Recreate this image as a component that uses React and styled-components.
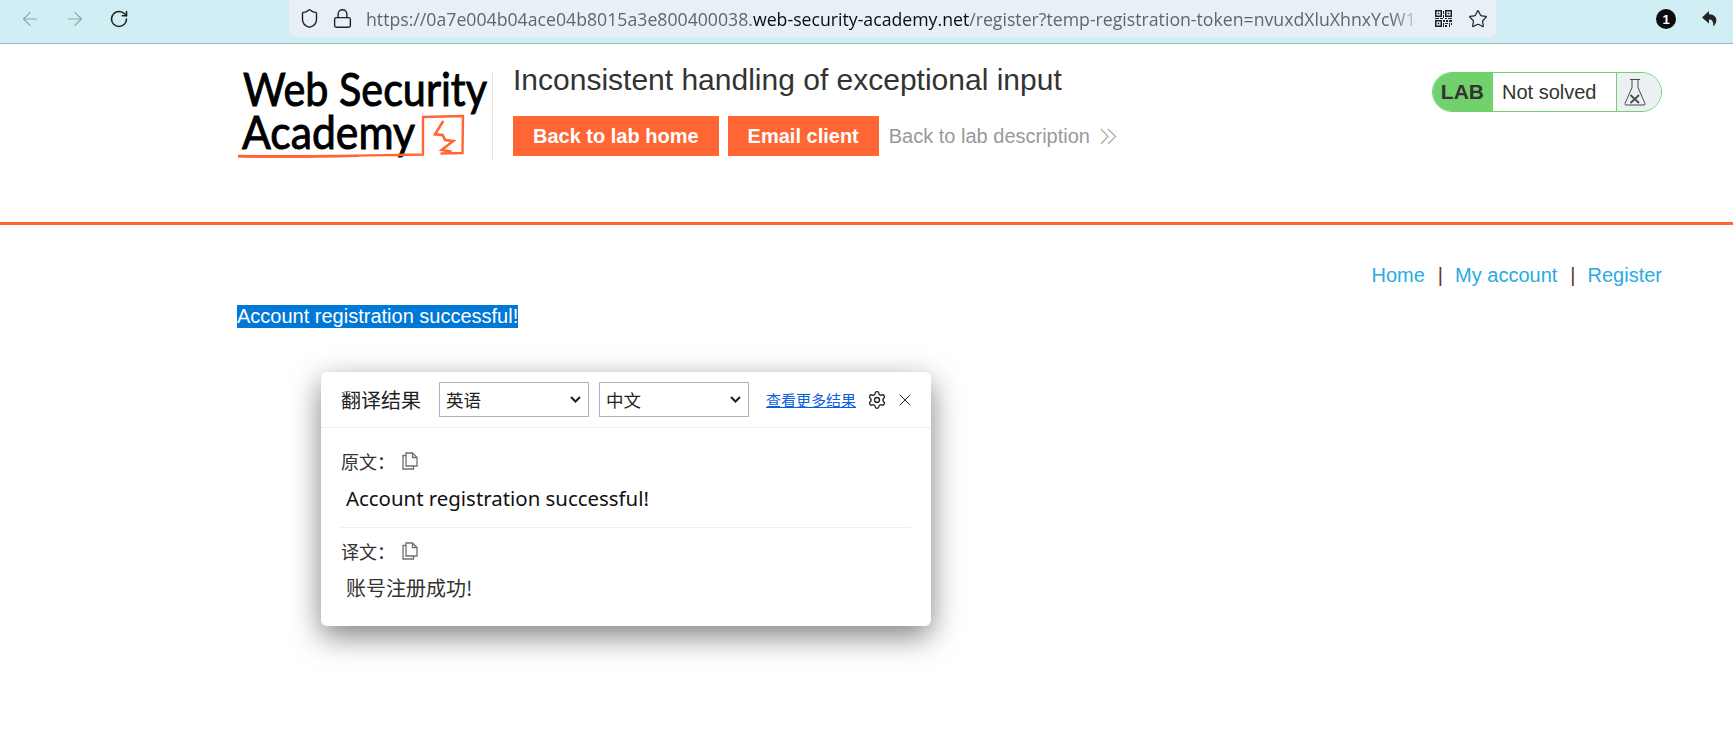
import React from "react";
import styled, { createGlobalStyle } from "styled-components";
import { ArrowLeft, ArrowRight, RotateCw, Shield, Lock, Star, Settings, X } from "lucide-react";

const GlobalStyle = createGlobalStyle`
  html, body {
    margin: 0;
    padding: 0;
    background: #fff;
    font-family: "Liberation Sans", Arial, sans-serif;
  }
`;

const Page = styled.div`
  position: relative;
  width: 1733px;
  height: 735px;
  overflow: hidden;
  background: #fff;
`;

const BrowserBar = styled.div`
  height: 43px;
  display: flex;
  align-items: flex-start;
  background: #d0eef3;
  border-bottom: 1px solid #9db8bb;
`;

const NavIcons = styled.div`
  width: 289px;
  height: 38px;
  flex-shrink: 0;
  display: flex;
  align-items: center;
  gap: 23px;
  padding-left: 19px;
  box-sizing: border-box;
`;

const UrlBar = styled.div`
  width: 1207px;
  height: 37px;
  flex-shrink: 0;
  box-sizing: border-box;
  display: flex;
  align-items: center;
  padding: 0 8px 0 10px;
  background: #e7f0f7;
  border-radius: 0 0 7px 7px;
`;

const UrlText = styled.div`
  flex: 1;
  margin-left: 13px;
  overflow: hidden;
  white-space: nowrap;
  font-family: "Open Sans", sans-serif;
  font-size: 17.7px;
  color: #5f6670;
  -webkit-mask-image: linear-gradient(to right, #000 97%, transparent);
  mask-image: linear-gradient(to right, #000 97%, transparent);
`;

const Host = styled.span`
  color: #0c0c0d;
`;

const LockGap = styled.div`
  margin-left: 12px;
  display: flex;
`;

const UrlActions = styled.div`
  display: flex;
  align-items: center;
  gap: 16px;
  margin-left: 12px;
`;

const ExtIcons = styled.div`
  flex: 1;
  height: 38px;
  display: flex;
  align-items: center;
  justify-content: flex-end;
  gap: 24px;
  padding-right: 13px;
`;

const Badge = styled.div`
  width: 20px;
  height: 20px;
  border-radius: 50%;
  background: #0c0c0d;
  color: #fff;
  font-size: 13px;
  font-weight: bold;
  display: flex;
  align-items: center;
  justify-content: center;
`;

const Header = styled.header`
  height: 181px;
  box-sizing: border-box;
  border-bottom: 3px solid #ff6633;
  padding: 18px 71px 0 237px;
  display: flex;
  align-items: flex-start;
`;

const Logo = styled.svg`
  width: 255px;
  height: 99px;
  flex-shrink: 0;
  display: block;
`;

const LogoDivider = styled.div`
  width: 1px;
  height: 90px;
  margin-top: 9px;
  flex-shrink: 0;
  background: #e6e6e6;
`;

const LabInfo = styled.div`
  flex: 1;
  margin-left: 20px;
`;

const LabTitle = styled.h2`
  margin: 0;
  font-size: 30px;
  line-height: 36px;
  font-weight: normal;
  color: #333332;
`;

const LabLinks = styled.div`
  margin-top: 18px;
  display: flex;
  align-items: center;
  gap: 9px;
`;

const OrangeButton = styled.a`
  height: 40px;
  padding: 0 20px;
  display: flex;
  align-items: center;
  background: #ff6633;
  color: #fff;
  font-size: 20px;
  font-weight: bold;
`;

const DescLink = styled.a`
  display: flex;
  align-items: center;
  gap: 10px;
  margin-left: 1px;
  color: #999;
  font-size: 20px;
`;

const LabStatus = styled.div`
  width: 230px;
  height: 40px;
  display: flex;
  box-sizing: border-box;
  border: 1px solid #70d16d;
  border-radius: 20px;
  overflow: hidden;
  margin-top: 10px;
`;

const LabTag = styled.div`
  width: 60px;
  background: #70d16d;
  color: #333332;
  font-size: 21px;
  font-weight: bold;
  display: flex;
  align-items: center;
  justify-content: flex-end;
  padding-right: 9px;
  box-sizing: border-box;
`;

const StatusText = styled.div`
  width: 123px;
  padding-left: 9px;
  box-sizing: border-box;
  display: flex;
  align-items: center;
  font-size: 20px;
  color: #333332;
  background: #fff;
`;

const FlaskCell = styled.div`
  flex: 1;
  background: #ebf0f2;
  border-left: 1px solid #70d16d;
  padding-left: 7px;
  display: flex;
  align-items: center;
`;

const Content = styled.main`
  padding: 38px 71px 0 237px;
`;

const TopNav = styled.nav`
  display: flex;
  justify-content: flex-end;
  align-items: center;
  height: 24px;
  font-size: 20px;
  color: #333;
`;

const NavLink = styled.a`
  color: #29abe2;
`;

const NavSep = styled.span`
  margin: 0 12px 0 13px;
  color: #5a3a2a;
`;

const SelectedLine = styled.div`
  margin-top: 18px;
  display: inline-block;
  height: 23px;
  line-height: 23px;
  font-size: 20px;
  color: #fff;
  background: #0078d7;
`;

const Popup = styled.div`
  position: absolute;
  left: 321px;
  top: 372px;
  width: 610px;
  height: 254px;
  background: #fff;
  border-radius: 6px;
  box-shadow: 0 10px 30px rgba(0, 0, 0, 0.5);
  font-family: "Noto Sans CJK SC", "Noto Sans", sans-serif;
  color: #222;
`;

const PopupHead = styled.div`
  height: 56px;
  box-sizing: border-box;
  border-bottom: 1px solid #eee;
  display: flex;
  align-items: center;
  padding: 0 20px;
`;

const PopupTitle = styled.div`
  width: 98px;
  flex-shrink: 0;
  font-size: 20px;
  white-space: nowrap;
`;

const LangSelect = styled.select`
  width: 150px;
  height: 35px;
  flex-shrink: 0;
  margin-right: 10px;
  padding-left: 6px;
  box-sizing: border-box;
  appearance: none;
  background-color: #fff;
  background-image: url("data:image/svg+xml,%3Csvg xmlns='http://www.w3.org/2000/svg' width='11' height='7' fill='none' stroke='%23222' stroke-width='2'%3E%3Cpath d='M1 1l4.500 4.500L10 1'/%3E%3C/svg%3E");
  background-repeat: no-repeat;
  background-position: right 7px center;
  border: 1px solid #a9b5c6;
  border-radius: 0;
  font-family: "Noto Sans CJK SC", sans-serif;
  font-size: 17.5px;
  color: #222;
`;

const MoreLink = styled.a`
  margin-left: 7px;
  font-size: 15px;
  color: #0a5fe0;
  text-decoration: underline;
  white-space: nowrap;
`;

const HeadIcons = styled.div`
  margin-left: 11px;
  display: flex;
  align-items: center;
  gap: 8px;
  color: #222;
`;

const PopupBody = styled.div`
  padding: 19px 20px 0;
`;

const Block = styled.div`
  & + & {
    margin-top: 14px;
    padding-top: 9px;
    border-top: 1px solid #eee;
  }
`;

const BlockLabel = styled.div`
  display: flex;
  align-items: center;
  height: 28px;
  font-size: 18px;
  color: #333;
  gap: 7px;
`;

const BlockText = styled.div`
  margin: 8px 0 1px 5px;
  height: 30px;
  line-height: 30px;
  font-size: ${(p) => (p.$latin ? "20.4px" : "20px")};
  color: ${(p) => (p.$latin ? "#111" : "#333")};
  font-family: ${(p) => (p.$latin ? '"Noto Sans", sans-serif' : '"Noto Sans CJK SC", sans-serif')};
`;

const CopyIcon = () => (
  <svg width="16" height="18" viewBox="0 0 16 18" fill="none" stroke="#6f6f6f" strokeWidth="1.3">
    <path d="M4 1h6.5L15 5.5V14H4z" />
    <path d="M10.5 1v4.5H15" />
    <path d="M4 3.5H1V17h10.5v-3" />
  </svg>
);

const QrIcon = () => (
  <svg width="17" height="17" viewBox="0 0 17 17" fill="#222">
    <path d="M0 0h7v7H0zM1.5 1.5v4h4v-4zM10 0h7v7h-7zM11.5 1.5v4h4v-4zM0 10h7v7H0zM1.5 11.500v4h4v-4z" fillRule="evenodd" />
    <path d="M2.700 2.700h1.600v1.600H2.700zM12.700 2.700h1.600v1.600h-1.600zM2.700 12.700h1.600v1.600H2.700zM8 1h1v3H8zM8 5h1v3H8zM0 8h4v1H0zM5 8h3v1H5zM10 8h2v1h-2zM13 8h4v1h-4zM8 10h2v2H8zM11 10h2v2h-2zM14 10h3v2h-3zM8 13h1v4H8zM10 13h3v1h-3zM14 13h1v4h-1zM10 15h2v2h-2zM16 13h1v2h-1z" />
  </svg>
);

const ReplyIcon = () => (
  <svg width="20" height="20" viewBox="0 0 20 20" fill="#222">
    <path d="M9 2 2 8.500l7 6V10.500c3 0 4.500 1.500 4.300 7 3-3 3.700-6 2.700-8.500-1-2.300-3.500-3.700-7-3.700z" />
  </svg>
);

const FlaskIcon = () => (
  <svg width="22" height="30" viewBox="0 0 22 30" fill="none" stroke="#4a4a4a" strokeWidth="1">
    <path d="M6 2.500h10M8 2.500v8L1 26.500q-.4 1.500 1 1.500h18q1.400 0 1-1.500l-7-16v-8" />
    <path d="M6.500 18 15 26M15 18l-8.500 8" strokeWidth="1.800" />
  </svg>
);

const Chevrons = () => (
  <svg width="17" height="17" viewBox="0 0 17 17" fill="none" stroke="#aaa" strokeWidth="1.200">
    <path d="M1 1l7 7.500-7 7.500M8 1l7.500 7.500L8 16" />
  </svg>
);

const LogoMark = () => (
  <Logo viewBox="0 -9 255 99">
    <text x="6" y="35" fontFamily="Lato, sans-serif" fontSize="47" textLength="244" lengthAdjust="spacingAndGlyphs" fill="#000" stroke="#000" strokeWidth="1">
      Web Security
    </text>
    <text x="5" y="78" fontFamily="Lato, sans-serif" fontSize="47" textLength="173" lengthAdjust="spacingAndGlyphs" fill="#000" stroke="#000" strokeWidth="1">
      Academy
    </text>
    <path d="M1 85c60 1 120-.500 185-1.500V46l40-1-.500 37-22 .500" fill="none" stroke="#ff6633" strokeWidth="2.400" />
    <path d="M1 85.500c40 1.200 80 .500 120-.500" fill="none" stroke="#ff6633" strokeWidth="2" />
    <path d="M206.300 50 198 63.300l7.700.7 2.300 5 8.300 1-11.600 9 10 1.700" fill="none" stroke="#ff6633" strokeWidth="2.600" />
  </Logo>
);

export default function App() {
  return (
    <Page>
      <GlobalStyle />
      <BrowserBar>
        <NavIcons>
          <ArrowLeft size={22} color="#8ea6ab" strokeWidth={1.3} />
          <ArrowRight size={22} color="#8ea6ab" strokeWidth={1.3} />
          <RotateCw size={20} color="#222" strokeWidth={1.9} />
        </NavIcons>
        <UrlBar>
          <Shield size={21} color="#222" strokeWidth={1.6} />
          <LockGap>
            <Lock size={21} color="#222" strokeWidth={1.6} />
          </LockGap>
          <UrlText>
            https://0a7e004b04ace04b8015a3e800400038.<Host>web-security-academy.net</Host>
            /register?temp-registration-token=nvuxdXluXhnxYcW1
          </UrlText>
          <UrlActions>
            <QrIcon />
            <Star size={20} color="#222" strokeWidth={1.5} />
          </UrlActions>
        </UrlBar>
        <ExtIcons>
          <Badge>1</Badge>
          <ReplyIcon />
        </ExtIcons>
      </BrowserBar>

      <Header>
        <LogoMark />
        <LogoDivider />
        <LabInfo>
          <LabTitle>Inconsistent handling of exceptional input</LabTitle>
          <LabLinks>
            <OrangeButton>Back to lab home</OrangeButton>
            <OrangeButton>Email client</OrangeButton>
            <DescLink>
              Back to lab description <Chevrons />
            </DescLink>
          </LabLinks>
        </LabInfo>
        <LabStatus>
          <LabTag>LAB</LabTag>
          <StatusText>Not solved</StatusText>
          <FlaskCell>
            <FlaskIcon />
          </FlaskCell>
        </LabStatus>
      </Header>

      <Content>
        <TopNav>
          <NavLink>Home</NavLink>
          <NavSep>|</NavSep>
          <NavLink>My account</NavLink>
          <NavSep>|</NavSep>
          <NavLink>Register</NavLink>
        </TopNav>
        <SelectedLine>Account registration successful!</SelectedLine>
      </Content>

      <Popup>
        <PopupHead>
          <PopupTitle>翻译结果</PopupTitle>
          <LangSelect defaultValue="en">
            <option value="en">英语</option>
          </LangSelect>
          <LangSelect defaultValue="zh">
            <option value="zh">中文</option>
          </LangSelect>
          <MoreLink>查看更多结果</MoreLink>
          <HeadIcons>
            <Settings size={20} strokeWidth={1.6} />
            <X size={20} strokeWidth={1.2} />
          </HeadIcons>
        </PopupHead>
        <PopupBody>
          <Block>
            <BlockLabel>
              原文：
              <CopyIcon />
            </BlockLabel>
            <BlockText $latin>Account registration successful!</BlockText>
          </Block>
          <Block>
            <BlockLabel>
              译文：
              <CopyIcon />
            </BlockLabel>
            <BlockText>账号注册成功!</BlockText>
          </Block>
        </PopupBody>
      </Popup>
    </Page>
  );
}
